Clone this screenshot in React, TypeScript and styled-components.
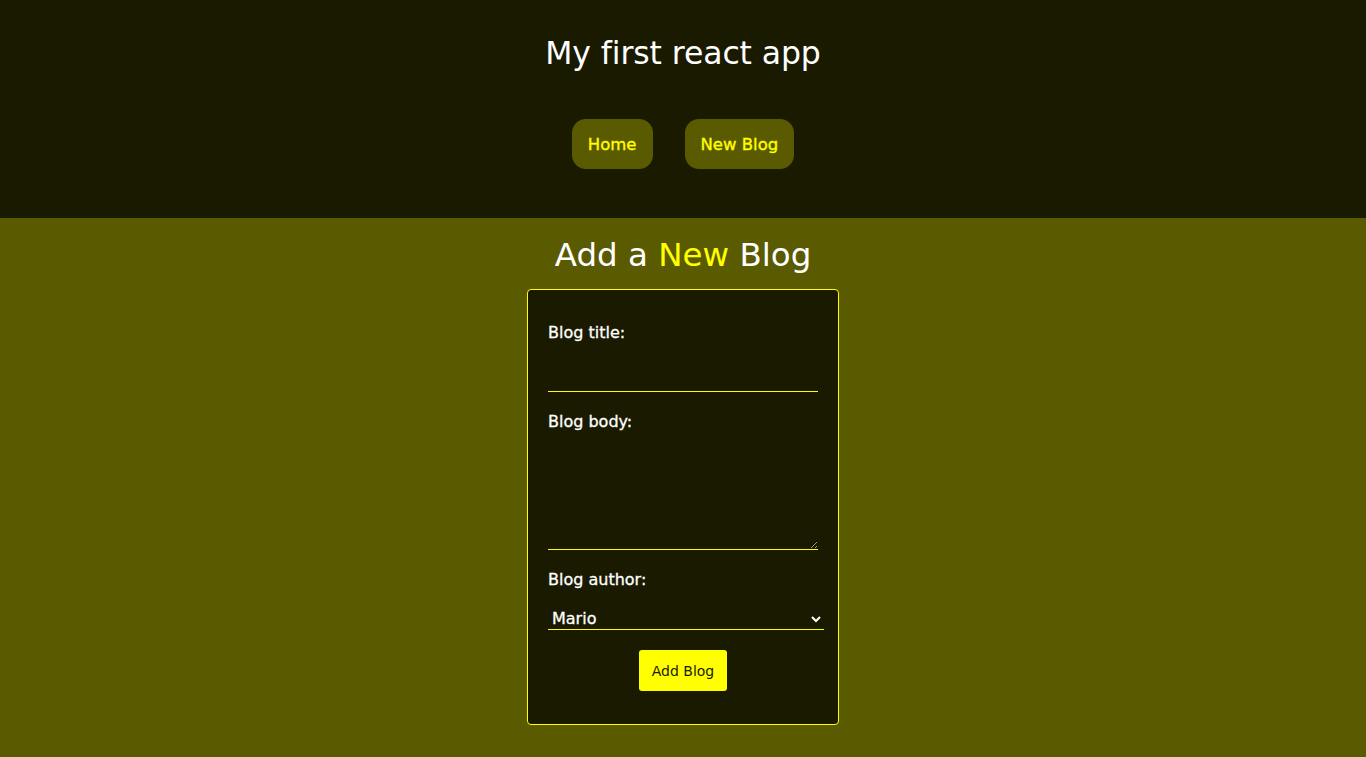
import React, { useState } from "react";
import styled, { createGlobalStyle } from "styled-components";

const Global = createGlobalStyle`
  html, body { margin: 0; padding: 0; }
  body {
    background: #5a5a00;
    font-family: "DejaVu Sans", "Noto Sans", sans-serif;
    color: #ffffff;
  }
  * { box-sizing: border-box; }
`;

const Header = styled.header`
  background: #1a1a00;
  height: 218px;
  padding-top: 33px;
  display: flex;
  flex-direction: column;
  align-items: center;
`;

const Title = styled.h1`
  margin: 0;
  font-size: 31.5px;
  line-height: 40px;
  font-weight: 400;
  letter-spacing: -0.1px;
  color: #ffffff;
`;

const Nav = styled.nav`
  margin-top: 46px;
  display: flex;
  gap: 32px;
`;

const NavLink = styled.a`
  display: flex;
  align-items: center;
  justify-content: center;
  height: 50px;
  padding: 0 16px;
  border-radius: 14px;
  background: #5a5a00;
  color: #ffff00;
  font-size: 16.5px;
  font-weight: 400;
  -webkit-text-stroke: 0.35px #ffff00;
  text-decoration: none;
  cursor: pointer;
`;

const Main = styled.main`
  display: flex;
  flex-direction: column;
  align-items: center;
  padding-bottom: 33px;
`;

const Heading = styled.h2`
  margin: 17px 0 14px;
  font-size: 32.5px;
  line-height: 40px;
  font-weight: 400;
  color: #ffffff;
`;

const Accent = styled.span`
  color: #ffff00;
`;

const Card = styled.form`
  width: 312px;
  background: #1a1a00;
  border: 1px solid #ffff00;
  border-radius: 4px;
  padding: 20px;
  display: flex;
  flex-direction: column;
`;

const Label = styled.label<{ $first?: boolean }>`
  display: block;
  margin-top: ${(p) => (p.$first ? "13px" : "20px")};
  font-size: 16px;
  line-height: 20px;
  font-weight: 400;
  -webkit-text-stroke: 0.3px #ffffff;
  color: #ffffff;
`;

const TextInput = styled.input`
  margin-top: 9px;
  width: 270px;
  height: 40px;
  background: transparent;
  border: none;
  border-bottom: 1px solid #ffff00;
  color: #ffffff;
  font-family: inherit;
  font-size: 16px;
  outline: none;
`;

const TextArea = styled.textarea`
  margin-top: 10px;
  width: 270px;
  height: 108px;
  background: transparent;
  border: none;
  border-bottom: 1px solid #ffff00;
  color: #ffffff;
  font-family: inherit;
  font-size: 16px;
  outline: none;
`;

const Select = styled.select`
  margin-top: 18px;
  width: 276px;
  height: 22px;
  padding: 0;
  background: #1a1a00;
  border: none;
  border-bottom: 1px solid #ffff00;
  color: #ffffff;
  font-family: inherit;
  font-size: 16px;
  -webkit-text-stroke: 0.3px #ffffff;
  outline: none;
`;

const SubmitButton = styled.button`
  align-self: center;
  margin: 20px 0 13px;
  width: 88px;
  height: 41px;
  padding: 0;
  background: #ffff00;
  color: #1a1a00;
  border: none;
  border-radius: 3px;
  font-family: inherit;
  font-size: 14px;
  cursor: pointer;
`;

export default function App() {
  const [title, setTitle] = useState("");
  const [body, setBody] = useState("");
  const [author, setAuthor] = useState("mario");
  return (
    <>
      <Global />
      <Header>
        <Title>My first react app</Title>
        <Nav>
          <NavLink>Home</NavLink>
          <NavLink>New Blog</NavLink>
        </Nav>
      </Header>
      <Main>
        <Heading>
          Add a <Accent>New</Accent> Blog
        </Heading>
        <Card onSubmit={(e) => e.preventDefault()}>
          <Label $first>Blog title:</Label>
          <TextInput value={title} onChange={(e) => setTitle(e.target.value)} />
          <Label>Blog body:</Label>
          <TextArea value={body} onChange={(e) => setBody(e.target.value)} />
          <Label>Blog author:</Label>
          <Select value={author} onChange={(e) => setAuthor(e.target.value)}>
            <option value="mario">Mario</option>
            <option value="yoshi">Yoshi</option>
          </Select>
          <SubmitButton type="submit">Add Blog</SubmitButton>
        </Card>
      </Main>
    </>
  );
}
